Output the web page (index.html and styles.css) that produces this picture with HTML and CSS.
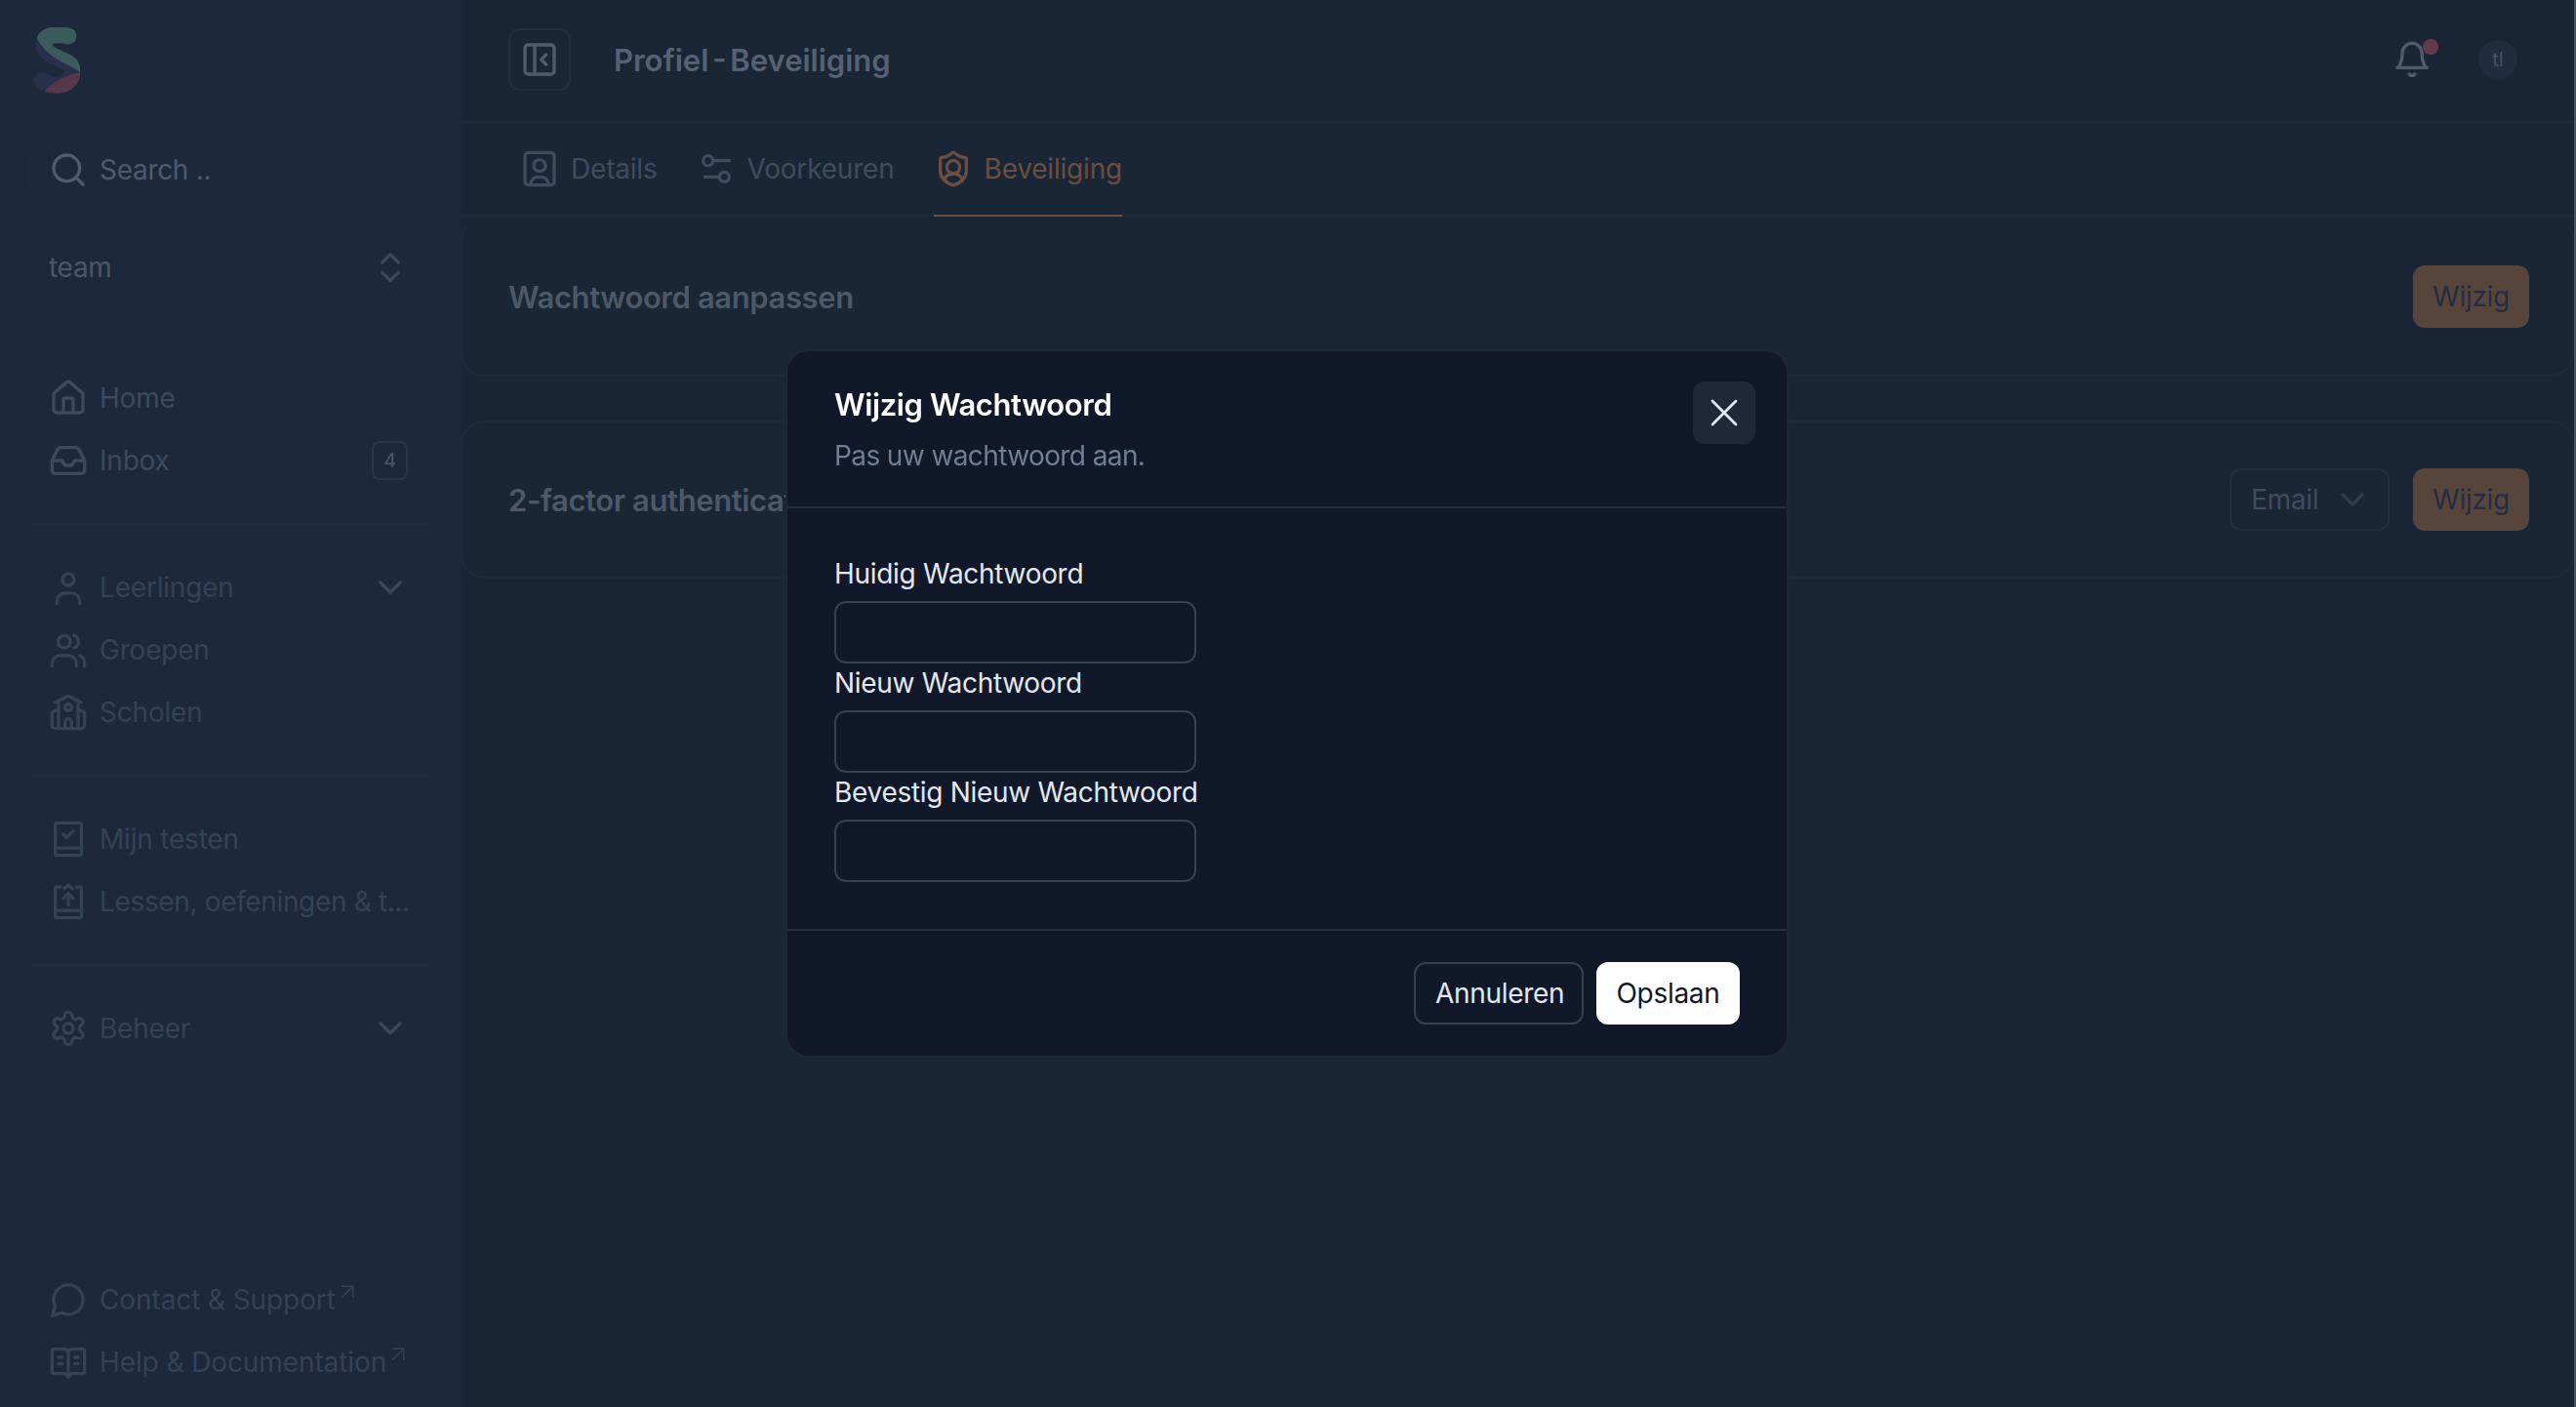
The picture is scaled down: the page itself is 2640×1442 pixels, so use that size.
FILE: index.html
```html
<!DOCTYPE html>
<html lang="nl">
<head>
<meta charset="utf-8">
<title>Profiel - Beveiliging</title>
<link rel="stylesheet" href="styles.css">
</head>
<body>
<svg class="defs" width="0" height="0" aria-hidden="true">
  <defs>
    <symbol id="i-chev" viewBox="0 0 24 24"><path d="m6 9 6 6 6-6"/></symbol>
    <symbol id="i-ext" viewBox="0 0 24 24"><path d="M7 7h10v10M7 17 17 7"/></symbol>
  </defs>
</svg>
<div class="app">
  <aside class="sidebar">
    <div class="logo">
      <svg class="logo-svg" viewBox="0 0 48 68" width="48" height="68">
        <defs>
          <clipPath id="c-teal"><path d="M0 0H48V46C36 36 14 34 2 8Z"/></clipPath>
          <clipPath id="c-red"><path d="M48 46V68H10C18 56 32 50 48 46Z"/></clipPath>
        </defs>
        <path id="s-curve" class="s-navy" d="M36 9C26 7 12 6 11 17C10 28 24 30 35 36C42 40 41 50 36 55C30 61 18 60 9 55"/>
        <path class="s-teal" clip-path="url(#c-teal)" d="M36 9C26 7 12 6 11 17C10 28 24 30 35 36C42 40 41 50 36 55"/>
        <path class="s-red" clip-path="url(#c-red)" d="M35 36C42 40 41 50 36 55C30 61 18 60 9 55"/>
      </svg>
    </div>
    <div class="search">
      <svg class="icon icon-bright" viewBox="0 0 24 24"><circle cx="11" cy="11" r="8"/><path d="m21 21-4.3-4.3"/></svg>
      <span>Search ..</span>
    </div>
    <div class="team">
      <span>team</span>
      <svg class="icon icon-chev" viewBox="0 0 24 24"><path d="m7 15 5 5 5-5M7 9l5-5 5 5"/></svg>
    </div>
    <nav class="nav-main">
      <a class="row row-bright"><svg class="icon" viewBox="0 0 24 24"><path d="M15 21v-8a1 1 0 0 0-1-1h-4a1 1 0 0 0-1 1v8"/><path d="M3 10a2 2 0 0 1 .709-1.528l7-5.999a2 2 0 0 1 2.582 0l7 5.999A2 2 0 0 1 21 10v9a2 2 0 0 1-2 2H5a2 2 0 0 1-2-2z"/></svg><span class="row-label">Home</span></a>
      <a class="row row-bright"><svg class="icon" viewBox="0 0 24 24"><path d="M22 12h-6l-2 3h-4l-2-3H2"/><path d="M5.45 5.11 2 12v6a2 2 0 0 0 2 2h16a2 2 0 0 0 2-2v-6l-3.45-6.89A2 2 0 0 0 16.76 4H7.24a2 2 0 0 0-1.79 1.11z"/></svg><span class="row-label">Inbox</span><span class="badge">4</span></a>
      <div class="divider"></div>
      <a class="row"><svg class="icon" viewBox="0 0 24 24"><circle cx="12" cy="7.2" r="3.6"/><path d="M5 22v-1.500a5 5 0 0 1 5-5h4a5 5 0 0 1 5 5V22"/></svg><span class="row-label">Leerlingen</span><svg class="icon icon-chev" viewBox="0 0 24 24"><use href="#i-chev"/></svg></a>
      <a class="row"><svg class="icon" viewBox="0 0 24 24"><circle cx="9.500" cy="7" r="3.800"/><path d="M2 22v-1.500a5 5 0 0 1 5-5h5a5 5 0 0 1 5 5V22"/><path d="M15.500 3.200a4 4 0 0 1 0 7.600"/><path d="M19 15.500a5 5 0 0 1 3 4.500V22"/></svg><span class="row-label">Groepen</span></a>
      <a class="row"><svg class="icon" viewBox="0 0 24 24"><path d="M14 22v-4a2 2 0 1 0-4 0v4"/><path d="m18 10 3.447 1.724a1 1 0 0 1 .553.894V20a2 2 0 0 1-2 2H4a2 2 0 0 1-2-2v-7.382a1 1 0 0 1 .553-.894L6 10"/><path d="M18 5v17"/><path d="m4 6 7.106-3.553a2 2 0 0 1 1.788 0L20 6"/><path d="M6 5v17"/><circle cx="12" cy="9" r="2"/></svg><span class="row-label">Scholen</span></a>
      <div class="divider"></div>
      <a class="row"><svg class="icon" viewBox="0 0 24 24"><path d="M5 2h14a1 1 0 0 1 1 1v18a1 1 0 0 1-1 1H5a1 1 0 0 1-1-1V3a1 1 0 0 1 1-1z"/><path d="M4 17.500h16"/><path d="m9 9 2 2 4-4"/></svg><span class="row-label">Mijn testen</span></a>
      <a class="row"><svg class="icon" viewBox="0 0 24 24"><path d="M7 3H5a1 1 0 0 0-1 1v17a1 1 0 0 0 1 1h14a1 1 0 0 0 1-1V4a1 1 0 0 0-1-1h-2"/><path d="M4 17.500h16"/><path d="M12 14V7.500"/><path d="m9 10 3-3 3 3"/><path d="m9.500 4 2.500-2 2.500 2"/></svg><span class="row-label row-clip">Lessen, oefeningen &amp; t...</span></a>
      <div class="divider"></div>
      <a class="row"><svg class="icon" viewBox="0 0 24 24"><path d="M12.220 2h-.44a2 2 0 0 0-2 2v.18a2 2 0 0 1-1 1.730l-.43.25a2 2 0 0 1-2 0l-.15-.08a2 2 0 0 0-2.730.73l-.22.38a2 2 0 0 0 .73 2.730l.15.1a2 2 0 0 1 1 1.720v.51a2 2 0 0 1-1 1.740l-.15.09a2 2 0 0 0-.73 2.730l.22.38a2 2 0 0 0 2.730.73l.15-.08a2 2 0 0 1 2 0l.43.25a2 2 0 0 1 1 1.730V20a2 2 0 0 0 2 2h.44a2 2 0 0 0 2-2v-.18a2 2 0 0 1 1-1.730l.43-.25a2 2 0 0 1 2 0l.15.08a2 2 0 0 0 2.730-.73l.22-.39a2 2 0 0 0-.73-2.730l-.15-.08a2 2 0 0 1-1-1.740v-.5a2 2 0 0 1 1-1.740l.15-.09a2 2 0 0 0 .73-2.730l-.22-.38a2 2 0 0 0-2.730-.73l-.15.08a2 2 0 0 1-2 0l-.43-.25a2 2 0 0 1-1-1.730V4a2 2 0 0 0-2-2z"/><circle cx="12" cy="12" r="3"/></svg><span class="row-label">Beheer</span><svg class="icon icon-chev" viewBox="0 0 24 24"><use href="#i-chev"/></svg></a>
    </nav>
    <nav class="nav-foot">
      <a class="row"><svg class="icon" viewBox="0 0 24 24"><path d="M7.900 20A9 9 0 1 0 4 16.100L2 22Z"/></svg><span class="foot-label">Contact &amp; Support</span><svg class="ext" viewBox="0 0 24 24"><use href="#i-ext"/></svg></a>
      <a class="row"><svg class="icon" viewBox="0 0 24 24"><path d="M12 6v15"/><path d="M3 19a1 1 0 0 1-1-1V5a1 1 0 0 1 1-1h6a3 3 0 0 1 3 2 3 3 0 0 1 3-2h6a1 1 0 0 1 1 1v13a1 1 0 0 1-1 1h-7l-2 2-2-2z"/><path d="M6 9h2M6 13h2M16 9h2M16 13h2"/></svg><span class="foot-label">Help &amp; Documentation</span><svg class="ext" viewBox="0 0 24 24"><use href="#i-ext"/></svg></a>
    </nav>
  </aside>

  <main class="main">
    <header class="topbar">
      <button class="toggle"><svg class="icon icon-bright" viewBox="0 0 24 24"><rect x="3" y="3" width="18" height="18" rx="2"/><path d="M9 3v18"/><path d="m16 15-3-3 3-3"/></svg></button>
      <h1 class="page-title">Profiel - Beveiliging</h1>
      <div class="top-actions">
        <div class="bell">
          <svg class="icon icon-bright" viewBox="0 0 24 24"><path d="M6 8a6 6 0 0 1 12 0c0 7 3 9 3 9H3s3-2 3-9"/><path d="M10.300 21a1.940 1.940 0 0 0 3.400 0"/></svg>
          <span class="dot"></span>
        </div>
        <div class="avatar">tl</div>
      </div>
    </header>
    <div class="tabs">
      <a class="tab"><svg class="icon" viewBox="0 0 24 24"><rect x="3" y="2" width="18" height="20" rx="2"/><circle cx="12" cy="10" r="3.600"/><path d="M6.500 22v-1a5 5 0 0 1 5-4h1a5 5 0 0 1 5 4v1"/></svg><span>Details</span></a>
      <a class="tab"><svg class="icon" viewBox="0 0 24 24"><path d="M20 7h-9"/><path d="M14 17H5"/><circle cx="17" cy="17" r="3"/><circle cx="7" cy="7" r="3"/></svg><span>Voorkeuren</span></a>
      <a class="tab tab-active"><svg class="icon" viewBox="0 0 24 24"><path d="M20 13c0 5-3.500 7.500-7.660 8.950a1 1 0 0 1-.67-.01C7.500 20.500 4 18 4 13V6a1 1 0 0 1 1-1c2 0 4.500-1.200 6.240-2.720a1.170 1.170 0 0 1 1.520 0C14.510 3.810 17 5 19 5a1 1 0 0 1 1 1z"/><path d="M6.376 18.910a6 6 0 0 1 11.249.003"/><circle cx="12" cy="11" r="4"/></svg><span>Beveiliging</span></a>
    </div>
    <section class="card">
      <h2 class="card-title">Wachtwoord aanpassen</h2>
      <div class="card-actions"><button class="btn-orange">Wijzig</button></div>
    </section>
    <section class="card card-second">
      <h2 class="card-title">2-factor authenticatie</h2>
      <div class="card-actions">
        <div class="select"><span>Email</span><svg class="icon-sm" viewBox="0 0 24 24"><use href="#i-chev"/></svg></div>
        <button class="btn-orange">Wijzig</button>
      </div>
    </section>
  </main>
  <div class="scrollbar"></div>
</div>

<div class="modal" role="dialog">
  <div class="modal-head">
    <h3 class="modal-title">Wijzig Wachtwoord</h3>
    <p class="modal-sub">Pas uw wachtwoord aan.</p>
    <button class="close"><svg viewBox="0 0 24 24" width="48" height="48"><path d="M18 6 6 18M6 6l12 12"/></svg></button>
  </div>
  <div class="modal-body">
    <label class="field-label">Huidig Wachtwoord</label>
    <div class="input"></div>
    <label class="field-label">Nieuw Wachtwoord</label>
    <div class="input"></div>
    <label class="field-label">Bevestig Nieuw Wachtwoord</label>
    <div class="input"></div>
  </div>
  <div class="modal-foot">
    <button class="btn btn-ghost">Annuleren</button>
    <button class="btn btn-white">Opslaan</button>
  </div>
</div>
</body>
</html>
```

FILE: styles.css
```css
* { box-sizing: border-box; }
html, body { margin: 0; height: 100%; }
body {
  font-family: Inter, "Noto Sans", "Liberation Sans", sans-serif;
  font-size: 28px;
  background: #1a2536;
  overflow: hidden;
  color: #334155;
}
.defs { position: absolute; }
h1, h2, h3, p { margin: 0; }
button { font: inherit; border: 0; padding: 0; background: none; }
.app { display: flex; height: 1442px; }

.icon {
  width: 40px; height: 40px; flex: none;
  fill: none; stroke: currentColor; stroke-width: 2;
  stroke-linecap: round; stroke-linejoin: round;
}
.icon-bright { color: #505b6d; }
.icon-chev { color: #394759; }

.sidebar {
  width: 474px; flex: none;
  padding: 0 34px 14px 30px;
  display: flex; flex-direction: column;
  background: #1e283b;
  border-right: 2px solid #1b2738;
}
.logo { height: 142px; padding: 28px 0 0 4px; }
.logo-svg { display: block; fill: none; stroke-width: 17; stroke-linecap: round; }
.s-navy { stroke: #282f4b; }
.s-teal { stroke: #3a5a5c; }
.s-red { stroke: #57384a; }

.search {
  height: 64px; display: flex; align-items: center; gap: 12px;
  padding-left: 18px; margin-right: -6px;
  border: 2px solid #1c2a3b; border-radius: 14px;
  color: #4f5a6c; letter-spacing: -.3px;
}
.team {
  height: 64px; margin-top: 36px; padding: 0 18px 0 20px;
  display: flex; align-items: center; justify-content: space-between;
  color: #4b5669; letter-spacing: -.3px;
}
.nav-main { margin-top: 70px; }
.row {
  height: 64px; padding: 0 18px 0 20px;
  display: flex; align-items: center; gap: 12px;
  color: #334255; letter-spacing: -.2px;
}
.row-bright { color: #3b4a5e; }
.row-label { flex: 1; min-width: 0; white-space: nowrap; }
.row-clip { margin-right: -4px; letter-spacing: -.35px; }
.badge {
  width: 37px; height: 40px; flex: none;
  display: flex; align-items: center; justify-content: center;
  border: 2px solid #2a3648; border-radius: 8px;
  font-size: 20px; color: #4a586a; margin-right: 2px;
}
.divider { height: 2px; margin: 32px 0; background: #1f2c3e; margin-right: -4px; }
.nav-foot { margin-top: auto; }
.foot-label { white-space: nowrap; letter-spacing: -.1px; }
.ext {
  width: 28px; height: 28px; flex: none; margin: -16px 0 0 -14px;
  fill: none; stroke: currentColor; stroke-width: 1.3;
}

.main { flex: 1; min-width: 0; }
.topbar {
  height: 126px; padding: 0 58px 2px 47px;
  display: flex; align-items: center;
  border-bottom: 2px solid #1e2a3b;
}
.toggle {
  width: 64px; height: 64px;
  display: flex; align-items: center; justify-content: center;
  border: 2px solid #222e40; border-radius: 12px;
}
.page-title {
  margin-left: 44px; font-size: 31px; font-weight: 600;
  color: #566273; word-spacing: -4px;
}
.top-actions { margin-left: auto; display: flex; align-items: center; gap: 48px; }
.bell { position: relative; height: 40px; }
.dot {
  position: absolute; top: -1px; right: -7px;
  width: 16px; height: 16px; border-radius: 50%;
  background: #633c4a;
}
.avatar {
  width: 40px; height: 40px; border-radius: 50%;
  display: flex; align-items: center; justify-content: center;
  background: #212c3e; color: #475366; font-size: 20px;
}
.tabs {
  height: 96px; padding-left: 59px;
  display: flex; gap: 40px;
  border-bottom: 2px solid #1e2a3b;
}
.tab {
  height: 96px;
  display: flex; align-items: center; gap: 12px;
  color: #3f4c5f; letter-spacing: -.2px;
  border-bottom: 2px solid transparent;
}
.tab-active { color: #6b4e3f; border-bottom-color: #6b4e3f; }

.card {
  height: 164px; margin-left: -2px; padding: 0 44px 0 47px;
  display: flex; align-items: center; justify-content: space-between;
  border: 2px solid #1e2a3b;
  border-top-color: transparent;
  border-radius: 24px;
}
.card-second { margin-top: 45px; height: 162px; border-top-color: #1e2a3b; }
.card-title { font-size: 31px; font-weight: 600; color: #4d5868; letter-spacing: -.4px; }
.card-actions { display: flex; gap: 24px; }
.btn-orange {
  width: 119px; height: 64px; border-radius: 12px;
  background: #57453c; color: #212d44; letter-spacing: -.3px;
}
.select {
  width: 164px; height: 64px; padding: 0 20px;
  display: flex; align-items: center; justify-content: space-between;
  border: 2px solid #232f40; border-radius: 12px;
  color: #3f4c5f; letter-spacing: -.3px;
}
.icon-sm {
  width: 40px; height: 40px; flex: none; margin-right: -4px;
  fill: none; stroke: #303d4f; stroke-width: 2;
  stroke-linecap: round; stroke-linejoin: round;
}
.scrollbar { width: 2px; flex: none; background: #4a5264; }

.modal {
  position: fixed; left: 805px; top: 358px; width: 1028px;
  background: #111829;
  border: 2px solid #1c2738;
  border-radius: 24px;
}
.modal-head {
  position: relative; height: 161px; padding: 35px 0 0 48px;
  border-bottom: 2px solid #232e40;
}
.modal-title { font-size: 31px; line-height: 40px; font-weight: 600; color: #fff; letter-spacing: -.4px; }
.modal-sub { margin-top: 12px; line-height: 40px; color: #6f7f96; letter-spacing: -.6px; }
.close {
  position: absolute; top: 31px; right: 32px;
  width: 64px; height: 64px; border-radius: 12px;
  display: flex; align-items: center; justify-content: center;
  background: #1f2839;
}
.close svg { fill: none; stroke: #e2e8f0; stroke-width: 1.4; stroke-linecap: round; }
.modal-body { height: 433px; padding: 47px 0 0 48px; border-bottom: 2px solid #232e40; }
.field-label { display: block; line-height: 40px; margin-bottom: 8px; color: #e2e8f0; letter-spacing: -.3px; }
.input { width: 371px; height: 64px; border: 2px solid #334155; border-radius: 12px; }
.modal-foot { display: flex; justify-content: flex-end; gap: 13px; padding: 32px 48px 32px 0; }
.btn { height: 64px; padding: 0 20px; border-radius: 12px; letter-spacing: -.3px; }
.btn-ghost { border: 2px solid #334155; color: #e2e8f0; width: 174px; }
.btn-white { background: #fff; color: #111829; width: 147px; }
```
